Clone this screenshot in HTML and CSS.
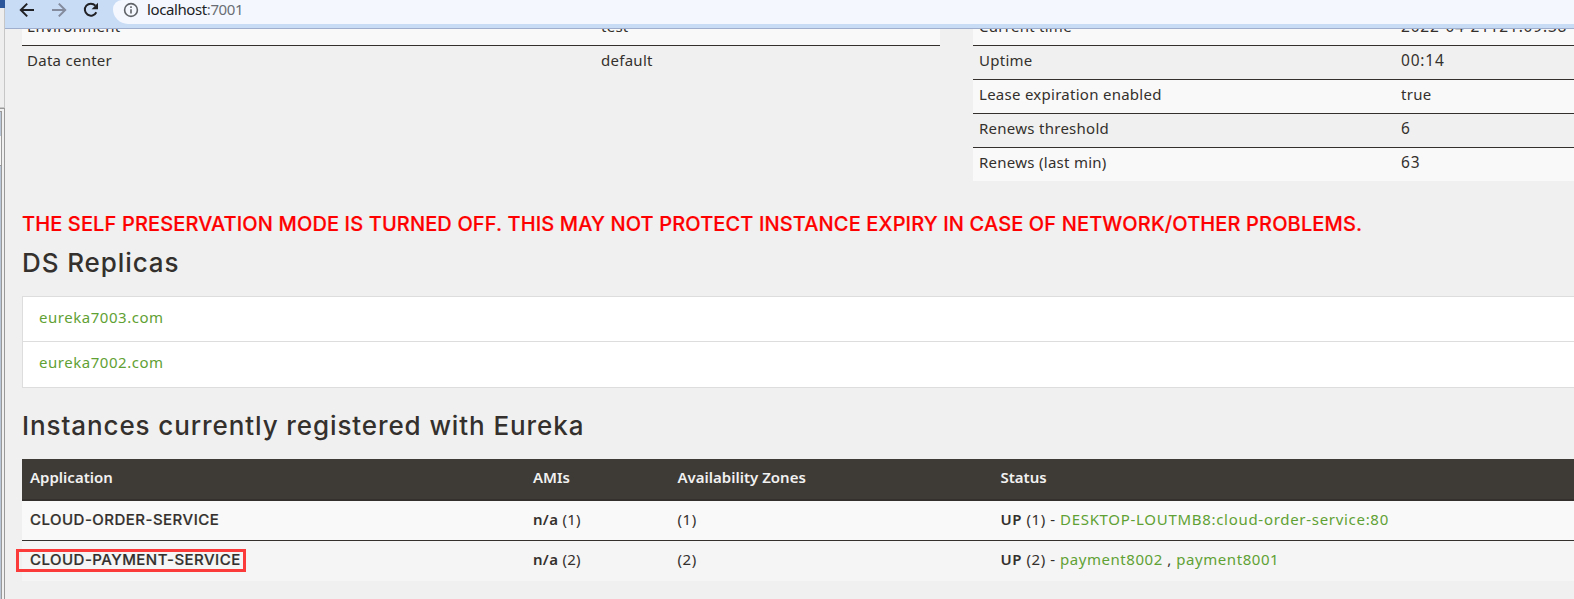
FILE: index.html
```
<!DOCTYPE html>
<html lang="en">
<head>
<meta charset="utf-8">
<title>Eureka</title>
<link rel="stylesheet" href="styles.css">
</head>
<body>
<div class="desktop">
  <div class="edge">
    <div class="edge-title"></div>
    <div class="edge-body"></div>
    <div class="edge-window"><div class="edge-tab"></div><div class="edge-gap"></div><div class="edge-pane"></div></div>
  </div>
  <div class="browser">
    <div class="toolbar">
      <svg class="nav back" viewBox="0 0 16 16"><path d="M15 8H2M8.2 1.6 1.8 8l6.4 6.4"/></svg>
      <svg class="nav forward" viewBox="0 0 16 16"><path d="M1 8h13M7.8 1.6 14.2 8l-6.4 6.4"/></svg>
      <svg class="nav reload" viewBox="0 0 16 16"><path d="M13.3 10.2A6 6 0 1 1 12.4 3.7"/><path class="solid" d="M15 .8v6.4H8.6z"/></svg>
      <div class="address">
        <svg class="info" viewBox="0 0 16 16"><circle cx="8" cy="8" r="6.4"/><path d="M8 7.2v4.2M8 4.3v1.7"/></svg>
        <span class="url">localhost<span class="port">:7001</span></span>
      </div>
    </div>
    <main class="page">
      <div class="status">
        <div class="facts">
          <div class="fact striped"><span>Environment</span><span>test</span></div>
          <div class="fact"><span>Data center</span><span>default</span></div>
        </div>
        <div class="facts runtime">
          <div class="fact striped"><span>Current time</span><span class="digits">2022-04-21T21:09:38</span></div>
          <div class="fact"><span>Uptime</span><span class="digits">00:14</span></div>
          <div class="fact striped"><span>Lease expiration enabled</span><span>true</span></div>
          <div class="fact"><span>Renews threshold</span><span class="digits">6</span></div>
          <div class="fact striped"><span>Renews (last min)</span><span class="digits">63</span></div>
        </div>
      </div>
      <h4 class="warning">THE SELF PRESERVATION MODE IS TURNED OFF. THIS MAY NOT PROTECT INSTANCE EXPIRY IN CASE OF NETWORK/OTHER PROBLEMS.</h4>
      <h1 class="replicas-title">DS Replicas</h1>
      <ul class="replicas">
        <li><a>eureka7003.com</a></li>
        <li><a>eureka7002.com</a></li>
      </ul>
      <h1 class="instances-title">Instances currently registered with Eureka</h1>
      <div class="instances">
        <div class="row head"><b>Application</b><b>AMIs</b><b>Availability Zones</b><b>Status</b></div>
        <div class="row first"><b class="app">CLOUD-ORDER-SERVICE</b><span class="ami"><b>n/a</b> (1)</span><span class="zone">(1)</span><span class="state"><b>UP</b> (1) - <a class="host">DESKTOP-LOUTMB8:cloud-order-service:80</a></span></div>
        <div class="row second"><b class="app marked">CLOUD-PAYMENT-SERVICE</b><span class="ami"><b>n/a</b> (2)</span><span class="zone">(2)</span><span class="state"><b>UP</b> (2) - <a>payment8002</a> , <a>payment8001</a></span></div>
      </div>
    </main>
  </div>
</div>
</body>
</html>
```
FILE: styles.css
```
* { box-sizing: border-box; }
body { margin: 0; background: #f0f0f0; color: #34302d; font: 16px/20px "Noto Sans", sans-serif; }
.desktop { display: flex; width: 1574px; height: 599px; overflow: hidden; }
.edge { flex: none; width: 5px; display: flex; flex-direction: column; }
.edge-title { height: 8px; background: #2b579a; }
.edge-body { height: 100px; background: #eee; border-right: 1px solid #c6c6c6; border-bottom: 1px solid #c6c6c6; }
.edge-window { flex: 1; border-top: 1px solid #999; border-right: 1px solid #999; padding: 2px 2px 0 0; background: #f0f0f0; display: flex; flex-direction: column; }
.edge-tab { height: 25px; background: #bac7d8; border-top: 1px solid #999; border-right: 1px solid #999; }
.edge-gap { height: 29px; background: #f5f5f5; border-right: 1px solid #999; }
.edge-pane { flex: 1; background: #bac7d8; border-top: 1px solid #999; border-right: 1px solid #999; }
.browser { flex: 1; min-width: 0; display: flex; flex-direction: column; }
.toolbar { flex: none; height: 29px; background: #c9dcf6; border-bottom: 1px solid #a0aecd; display: flex; align-items: flex-start; padding-left: 14px; }
.nav { width: 16px; height: 16px; margin-top: 2px; fill: none; stroke: #202124; stroke-width: 2; }
.forward { margin-left: 16px; stroke: #838b9c; }
.reload { margin-left: 16px; }
.reload .solid { fill: #202124; stroke: none; }
.address { flex: 1; height: 24px; margin-left: 14px; padding-left: 10px; background: #f4f8fe; border-bottom-left-radius: 15px; border-top-left-radius: 9px; display: flex; align-items: flex-start; }
.info { width: 16px; height: 16px; margin-top: 2px; fill: none; stroke: #5f6368; stroke-width: 1.6; }
.url { margin-left: 8px; font-size: 15px; line-height: 18px; color: #202124; letter-spacing: -0.4px; }
.port { color: #6a6e74; }
.page { flex: 1; min-height: 0; overflow: hidden; padding-left: 17px; }
.status { display: flex; gap: 33px; margin-top: -18px; height: 170px; }
.facts { width: 918px; flex: none; font-size: 15px; letter-spacing: .27px; }
.fact { height: 34px; border-top: 1px solid #34302d; display: grid; grid-template-columns: 574px 1fr; padding: 4px 5px 0; }
.runtime .fact { grid-template-columns: 422px 1fr; padding-left: 6px; }
.digits { font-size: 15.5px; letter-spacing: .8px; }
.striped { background: #f9f9f9; }
h1, h4 { margin: 0; font-weight: 500; white-space: nowrap; }
.warning { margin-top: 30px; height: 24px; font: 500 20px/26px Inter, sans-serif; letter-spacing: .13px; -webkit-text-stroke: .2px #f00; color: #f00; }
.replicas-title, .instances-title { font: 500 26px/30px Inter, sans-serif; letter-spacing: .9px; }
.replicas-title { margin-top: 13px; }
.replicas { list-style: none; margin: 18px 0 0; padding: 0; background: #fff; border: 1px solid #ddd; border-right: 0; height: 92px; }
.replicas li { height: 44px; padding: 10px 16px 0; letter-spacing: .53px; font-size: 15px; }
.replicas li + li { border-top: 1px solid #ddd; }
a { color: #5fa134; }
.instances-title { margin-top: 23px; }
.instances { margin-top: 18px; font-size: 15px; white-space: nowrap; }
.row { display: grid; grid-template-columns: 503px 144.5px 323px 1fr; padding-left: 8px; }
.row b { font-weight: 600; }
.row .app { font: 500 15px/21px Inter, sans-serif; letter-spacing: .48px; -webkit-text-stroke: .2px #34302d; }
.ami { letter-spacing: .3px; }
.zone, .state { letter-spacing: .55px; }
.host { letter-spacing: .7px; }
.head { height: 42px; padding-top: 8px; background: #3e3a35; border-bottom: 2px solid #34302d; color: #f1f1f1; }
.first { height: 39px; padding-top: 8px; background: #f9f9f9; }
.second { height: 41px; padding-top: 8px; background: #f5f5f5; border-top: 1px solid #34302d; }
.marked { position: relative; }
.marked::after { content: ""; box-sizing: border-box; position: absolute; left: -14px; top: 0; width: 230px; height: 23px; border: 3px solid #fb3a3a; }
```
